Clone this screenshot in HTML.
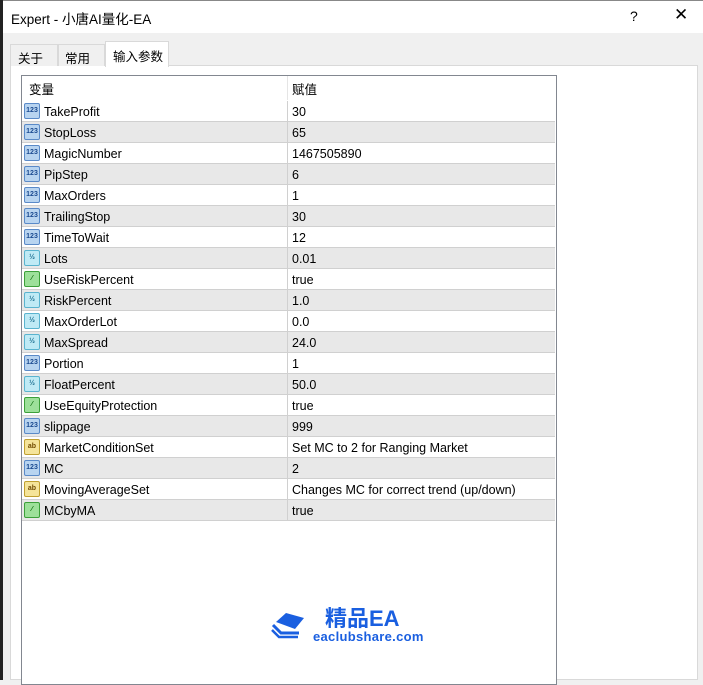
<!DOCTYPE html><html><head><meta charset="utf-8"><style>
*{margin:0;padding:0;box-sizing:border-box}
body{width:703px;height:680px;overflow:hidden;background:#f0f0f0;font-family:"Liberation Sans","Noto Sans CJK SC",sans-serif;font-size:12px;color:#000;position:relative}
.abs{position:absolute}
.row{position:absolute;left:22px;width:533px;height:21px;border-bottom:1px solid #d0d0d0}
.row span{position:absolute;top:4px;font-size:12.5px}
.ic{position:absolute;left:2px;top:2px;width:16px;height:16px;border-radius:2px;font-size:7px;font-weight:bold;line-height:14px;text-align:center}
.i{background:#b8d4f0;border:1px solid #5a8ac8;color:#1a4a90}
.h{background:#bfeaf5;border:1px solid #5ab4cf;color:#1a6e90}
.b{background:#9de09a;border:1px solid #3ca03a;color:#0a6a0a}
.a{background:#f5e49a;border:1px solid #c0a030;color:#704a00}
</style></head><body>
<div class="abs" style="left:0;top:0;width:3px;height:680px;background:#222"></div>
<div class="abs" style="left:3px;top:0;width:700px;height:33px;background:#fff;border-top:1px solid #888"></div>
<div class="abs" style="left:11px;top:8px;font-size:13.5px">Expert - 小唐AI量化-EA</div>
<div class="abs" style="left:630px;top:8px;font-size:14px">?</div>
<div class="abs" style="left:674px;top:5px;font-size:17px">✕</div>
<div class="abs" style="left:10px;top:65px;width:688px;height:615px;background:#fff;border:1px solid #d9d9d9"></div>
<div class="abs" style="left:10px;top:44px;width:48px;height:22px;border:1px solid #d9d9d9;border-bottom:none;background:#f0f0f0;padding:3px 0 0 7px;font-size:12.5px">关于</div>
<div class="abs" style="left:58px;top:44px;width:47px;height:22px;border:1px solid #d9d9d9;border-bottom:none;background:#f0f0f0;padding:3px 0 0 6px;font-size:12.5px">常用</div>
<div class="abs" style="left:105px;top:41px;width:64px;height:26px;border:1px solid #d9d9d9;border-bottom:none;background:#fff;padding:4px 0 0 7px;font-size:12.5px">输入参数</div>
<div class="abs" style="left:21px;top:75px;width:536px;height:610px;border:1px solid #828790;background:#fff"></div>
<div class="abs" style="left:287px;top:76px;width:1px;height:24px;background:#e5e5e5"></div>
<div class="abs" style="left:29px;top:79px;font-size:12.5px">变量</div>
<div class="abs" style="left:292px;top:79px;font-size:12.5px">赋值</div>
<div id="rows"></div>
<div class="abs" style="left:270px;top:606px;width:40px;height:34px">
<svg width="40" height="34" viewBox="0 0 40 34"><path d="M6 16 L16 7 L34 12 L25 23 Z" fill="#1a5fe0"/><path d="M3 19 L11 27 L29 27" stroke="#1a5fe0" stroke-width="3" fill="none"/><path d="M2 24 L9 31 L28 31" stroke="#1a5fe0" stroke-width="2.5" fill="none"/></svg></div>
<div class="abs" style="left:325px;top:601px;font-size:22px;font-weight:bold;color:#1a5fe0">精品EA</div>
<div class="abs" style="left:313px;top:629px;font-size:13px;font-weight:bold;color:#1a5fe0;letter-spacing:.3px">eaclubshare.com</div>
<script>
var d=[["i","TakeProfit","30"],["i","StopLoss","65"],["i","MagicNumber","1467505890"],["i","PipStep","6"],["i","MaxOrders","1"],["i","TrailingStop","30"],["i","TimeToWait","12"],["h","Lots","0.01"],["b","UseRiskPercent","true"],["h","RiskPercent","1.0"],["h","MaxOrderLot","0.0"],["h","MaxSpread","24.0"],["i","Portion","1"],["h","FloatPercent","50.0"],["b","UseEquityProtection","true"],["i","slippage","999"],["a","MarketConditionSet","Set MC to 2 for Ranging Market"],["i","MC","2"],["a","MovingAverageSet","Changes MC for correct trend (up/down)"],["b","MCbyMA","true"]];
var t={i:"123",h:"½",b:"⁄",a:"ab"},h="";
d.forEach(function(r,k){h+='<div class="row" style="top:'+(101+k*21)+'px;background:'+(k%2?'#e8e8e8':'#fff')+'"><div class="ic '+r[0]+'">'+t[r[0]]+'</div><span style="left:22px">'+r[1]+'</span><div style="position:absolute;left:265px;top:0;width:1px;height:21px;background:#d0d0d0"></div><span style="left:270px">'+r[2]+'</span></div>'});
document.getElementById("rows").innerHTML=h;
</script>
</body></html>
